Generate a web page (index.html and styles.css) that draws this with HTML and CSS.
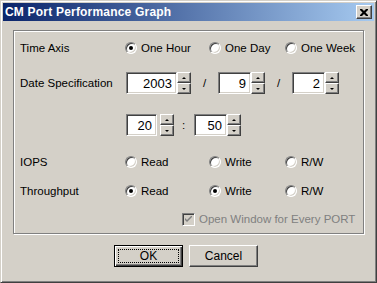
FILE: index.html
```html
<!DOCTYPE html>
<html lang="en">
<head>
    <meta charset="UTF-8">
    <title>CM Port Performance Graph</title>
    <link rel="stylesheet" href="styles.css">
</head>
<body>

<div class="window">
    <div class="titlebar">
        <span class="title">CM Port Performance Graph</span>
        <span class="close">
            <svg width="8" height="7" viewBox="0 0 8 7"><path d="M0 0h2l2 2 2-2h2v1l-2.5 2.5 2.5 2.5v1h-2l-2-2-2 2h-2v-1l2.5-2.5-2.5-2.5z" fill="#000"/></svg>
        </span>
    </div>

    <div class="content">
        <div class="group">
            <!-- time axis -->
            <div class="label">Time Axis</div>
            <div class="opt"><span class="radio on"></span>One Hour</div>
            <div class="opt"><span class="radio"></span>One Day</div>
            <div class="opt"><span class="radio"></span>One Week</div>

            <!-- date -->
            <div class="label">Date Specification</div>
            <div class="spins">
                <div class="spin"><span class="box w50">2003</span><span class="arrows"><i class="up"></i><i class="down"></i></span></div>
                <span class="sep">/</span>
                <div class="spin"><span class="box w33">9</span><span class="arrows"><i class="up"></i><i class="down"></i></span></div>
                <span class="sep">/</span>
                <div class="spin"><span class="box w33">2</span><span class="arrows"><i class="up"></i><i class="down"></i></span></div>
            </div>

            <div class="label"></div>
            <div class="spins">
                <div class="spin gap"><span class="box w31">20</span><span class="arrows"><i class="up"></i><i class="down"></i></span></div>
                <span class="sep colon">:</span>
                <div class="spin"><span class="box w32">50</span><span class="arrows"><i class="up"></i><i class="down"></i></span></div>
            </div>

            <!-- iops -->
            <div class="label">IOPS</div>
            <div class="opt"><span class="radio"></span>Read</div>
            <div class="opt"><span class="radio"></span>Write</div>
            <div class="opt"><span class="radio"></span>R/W</div>

            <div class="label">Throughput</div>
            <div class="opt"><span class="radio on"></span>Read</div>
            <div class="opt"><span class="radio on"></span>Write</div>
            <div class="opt"><span class="radio"></span>R/W</div>

            <div class="check">
                <span class="checkbox">
                    <svg width="7" height="7" viewBox="0 0 7 7"><path d="M0 2l2 2 5-5v2l-5 5-2-2z" fill="#808080"/></svg>
                </span>
                Open Window for Every PORT
            </div>
        </div>

        <div class="buttons">
            <div class="btn default"><span class="focus">OK</span></div>
            <div class="btn">Cancel</div>
        </div>
    </div>
</div>

</body>
</html>
```

FILE: styles.css
```css
body{
    margin: 0;
    background-color: #d4d0c8;
    font-family: "Liberation Sans", Arial, sans-serif;
    font-size: 11.5px;
    color: #000;
}
.window{
    width: 377px;
    height: 283px;
    box-sizing: border-box;
    border: 1px solid;
    border-color: #d4d0c8 #404040 #404040 #d4d0c8;
    box-shadow: inset 1px 1px #fff, inset -1px -1px #808080;
    padding: 2px;
    background-color: #d4d0c8;
}
.titlebar{
    height: 18px;
    background: linear-gradient(to right, #0a246a, #a6caf0);
    display: flex;
    align-items: center;
    justify-content: space-between;
    padding: 0 2px 0 2px;
}
.title{
    color: #fff;
    font-weight: bold;
    font-size: 12px;
    letter-spacing: 0.2px;
}
.close{
    width: 16px;
    height: 14px;
    box-sizing: border-box;
    background-color: #d4d0c8;
    border: 1px solid;
    border-color: #fff #404040 #404040 #fff;
    box-shadow: inset -1px -1px #808080;
    display: flex;
    align-items: center;
    justify-content: center;
}
.content{
    padding: 9px 10px 0 10px;
}
.group{
    height: 204px;
    box-sizing: border-box;
    border: 1px solid #808080;
    box-shadow: 1px 1px #fff, inset 1px 1px #fff;
    padding: 1px 0 0 6px;
    display: grid;
    grid-template-columns: 105px 84px 76px auto;
    grid-template-rows: 32px 38px 46px 28px 30px 26px;
    align-items: center;
}
.opt{
    display: flex;
    align-items: center;
}
.radio{
    width: 12px;
    height: 12px;
    box-sizing: border-box;
    border-radius: 50%;
    border: 1px solid;
    border-color: #808080 #fff #fff #808080;
    box-shadow: inset 1px 1px #404040, inset -1px -1px #d4d0c8;
    background-color: #fff;
    margin-right: 4px;
    display: flex;
    align-items: center;
    justify-content: center;
}
.radio.on::after{
    content: "";
    width: 4px;
    height: 4px;
    border-radius: 50%;
    background-color: #000;
}
.spins{
    grid-column: 2 / 5;
    display: flex;
    align-items: center;
    margin-left: 1px;
}
.spin{
    display: flex;
}
.spin.gap .arrows{
    margin-left: 3px;
}
.box{
    height: 22px;
    box-sizing: border-box;
    border: 1px solid;
    border-color: #808080 #fff #fff #808080;
    box-shadow: inset 1px 1px #404040, inset -1px -1px #d4d0c8;
    background-color: #fff;
    text-align: right;
    padding: 3px 4px 0 0;
    font-size: 13px;
}
.w50{ width: 51px; }
.w33{ width: 33px; }
.w31{ width: 31px; }
.w32{ width: 33px; }
.arrows{
    display: flex;
    flex-direction: column;
    width: 14px;
    height: 22px;
}
.arrows i{
    flex: 1;
    box-sizing: border-box;
    border: 1px solid;
    border-color: #fff #404040 #404040 #fff;
    box-shadow: inset -1px -1px #808080;
    background-color: #d4d0c8;
    display: flex;
    align-items: center;
    justify-content: center;
}
.arrows i::after{
    content: "";
    border-left: 2px solid transparent;
    border-right: 2px solid transparent;
}
.arrows .up::after{
    border-bottom: 2px solid #000;
}
.arrows .down::after{
    border-top: 2px solid #000;
}
.sep{
    width: 27px;
    text-align: center;
}
.sep.colon{
    width: 20px;
    text-align: left;
    padding-left: 8px;
    box-sizing: border-box;
}
.check{
    grid-column: 1 / 5;
    display: flex;
    align-items: center;
    padding-left: 162px;
    color: #808080;
}
.checkbox{
    width: 13px;
    height: 13px;
    box-sizing: border-box;
    border: 1px solid;
    border-color: #808080 #fff #fff #808080;
    box-shadow: inset 1px 1px #404040, inset -1px -1px #d4d0c8;
    background-color: #d4d0c8;
    margin-right: 4px;
    display: flex;
    align-items: center;
    justify-content: center;
}
.buttons{
    display: flex;
    justify-content: center;
    gap: 6px;
    margin-top: 11px;
    padding-right: 5px;
}
.btn{
    width: 69px;
    height: 22px;
    box-sizing: border-box;
    border: 1px solid;
    border-color: #fff #404040 #404040 #fff;
    box-shadow: inset -1px -1px #808080;
    display: flex;
    align-items: center;
    justify-content: center;
    font-size: 12px;
}
.btn.default{
    border: 1px solid #000;
    box-shadow: inset 1px 1px #fff, inset -1px -1px #404040, inset -2px -2px #808080;
    padding: 3px;
}
.focus{
    width: 100%;
    height: 100%;
    box-sizing: border-box;
    border: 1px dotted #000;
    display: flex;
    align-items: center;
    justify-content: center;
}
```
